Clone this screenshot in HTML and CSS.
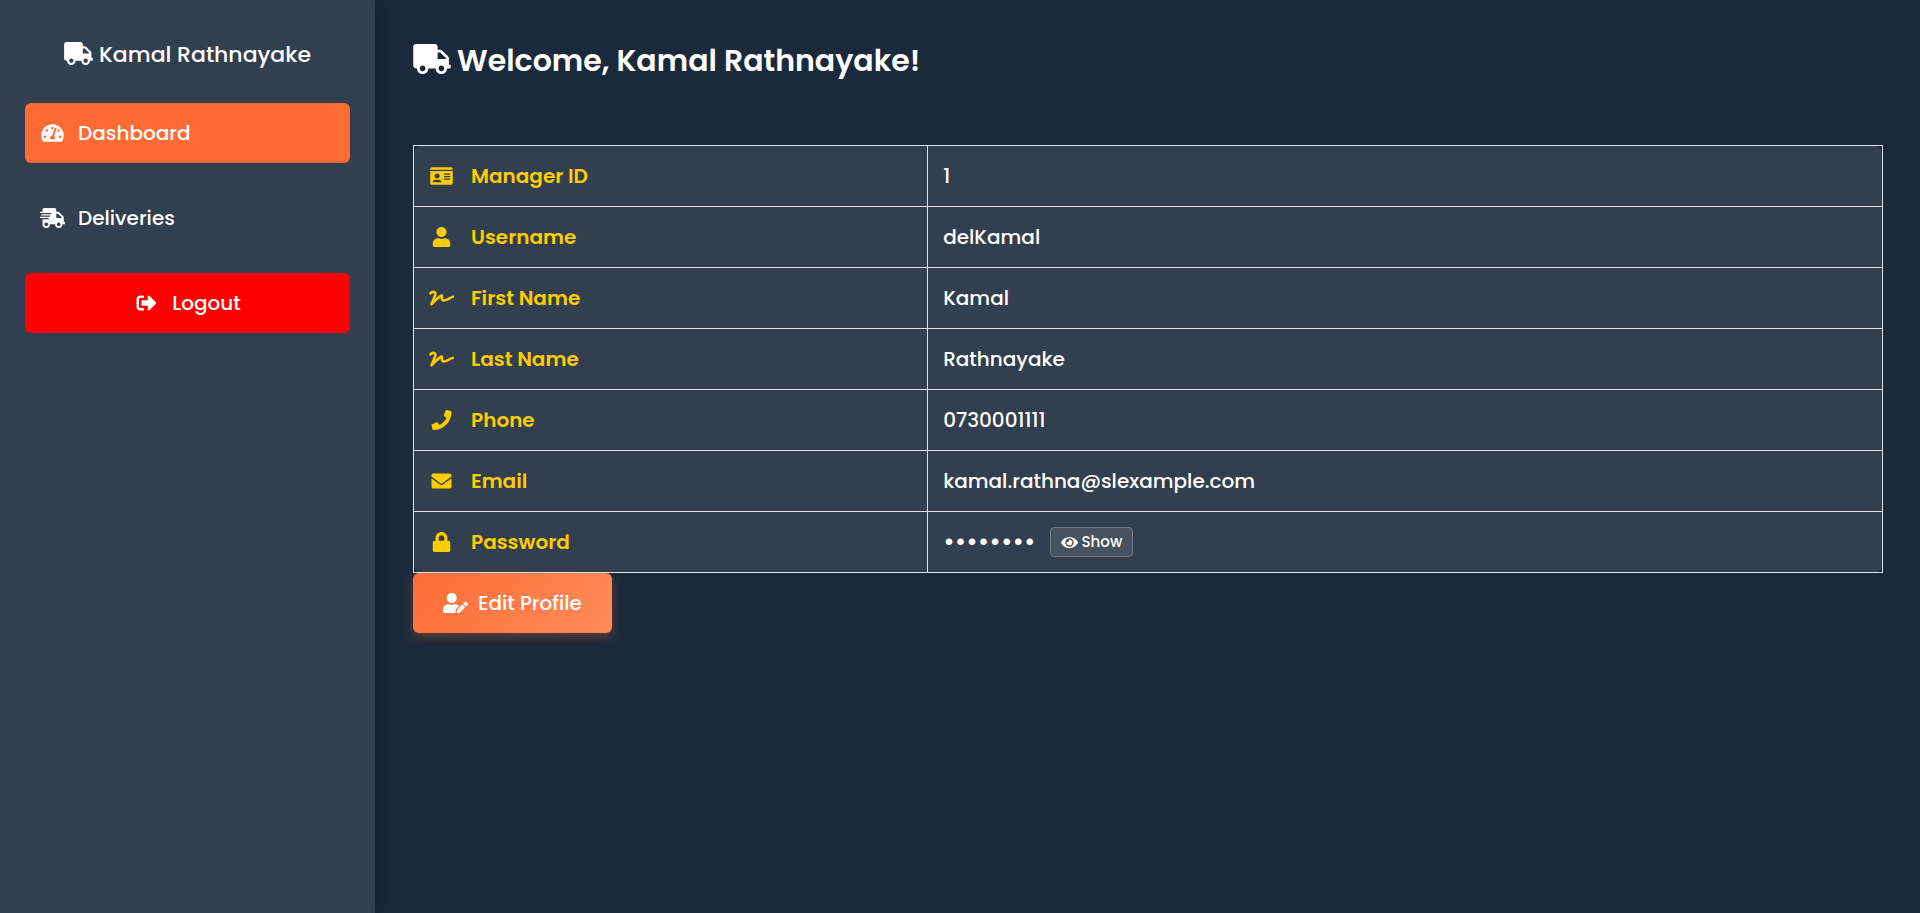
FILE: index.html
```html
<!DOCTYPE html>
<html lang="en">
<head>
<meta charset="utf-8">
<meta name="viewport" content="width=device-width, initial-scale=1">
<title>Delivery Manager Dashboard</title>
<link rel="stylesheet" href="styles.css">
</head>
<body>
<svg class="sprite" aria-hidden="true">
  <symbol id="truck" viewBox="0 0 640 512"><path d="M624 352h-16V243.900c0-12.700-5.100-24.900-14.100-33.900L494 110.100c-9-9-21.200-14.100-33.900-14.100H416V48c0-26.500-21.500-48-48-48H48C21.500 0 0 21.500 0 48v320c0 26.500 21.500 48 48 48h16c0 53 43 96 96 96s96-43 96-96h128c0 53 43 96 96 96s96-43 96-96h48c8.800 0 16-7.200 16-16v-32c0-8.800-7.200-16-16-16zM160 464c-26.500 0-48-21.500-48-48s21.500-48 48-48 48 21.500 48 48-21.500 48-48 48zm320 0c-26.500 0-48-21.500-48-48s21.500-48 48-48 48 21.500 48 48-21.500 48-48 48zm80-208H416V144h44.100l99.900 99.900V256z"/></symbol>
  <symbol id="gauge" viewBox="0 0 576 512"><path d="M288 32C128.940 32 0 160.940 0 320c0 52.800 14.250 102.260 39.060 144.800 5.610 9.620 16.300 15.200 27.440 15.200h443c11.140 0 21.830-5.580 27.440-15.200C561.750 422.260 576 372.800 576 320c0-159.060-128.940-288-288-288zm0 64c14.710 0 26.580 10.130 30.320 23.650-1.110 2.260-2.640 4.230-3.450 6.670l-9.220 27.670c-5.130 3.490-10.970 6.010-17.640 6.010-17.670 0-32-14.330-32-32S270.330 96 288 96zM96 384c-17.670 0-32-14.330-32-32s14.330-32 32-32 32 14.330 32 32-14.330 32-32 32zm48-160c-17.670 0-32-14.330-32-32s14.330-32 32-32 32 14.330 32 32-14.330 32-32 32zm246.770-72.410l-61.330 184C343.130 347.330 352 364.540 352 384c0 11.720-3.380 22.550-8.880 32H232.880c-5.500-9.450-8.880-20.280-8.880-32 0-33.940 26.500-61.430 59.900-63.590l61.340-184.010c4.170-12.560 17.730-19.450 30.360-15.170 12.570 4.190 19.350 17.790 15.170 30.360zm14.660 57.200l15.520-46.550c3.470-1.290 7.130-2.230 11.050-2.230 17.670 0 32 14.330 32 32s-14.330 32-32 32c-11.380-.01-20.890-6.280-26.570-15.220zM480 384c-17.670 0-32-14.330-32-32s14.330-32 32-32 32 14.330 32 32-14.330 32-32 32z"/></symbol>
  <symbol id="shipping" viewBox="0 0 640 512"><path d="M624 352h-16V243.900c0-12.700-5.100-24.900-14.100-33.900L494 110.100c-9-9-21.200-14.100-33.900-14.100H416V48c0-26.500-21.500-48-48-48H112C85.500 0 64 21.500 64 48v48H8c-4.400 0-8 3.600-8 8v16c0 4.400 3.600 8 8 8h272c4.400 0 8 3.600 8 8v16c0 4.400-3.600 8-8 8H40c-4.400 0-8 3.600-8 8v16c0 4.400 3.600 8 8 8h208c4.400 0 8 3.600 8 8v16c0 4.400-3.600 8-8 8H8c-4.400 0-8 3.600-8 8v16c0 4.400 3.600 8 8 8h208c4.400 0 8 3.600 8 8v16c0 4.400-3.600 8-8 8H64v128c0 53 43 96 96 96s96-43 96-96h128c0 53 43 96 96 96s96-43 96-96h48c8.800 0 16-7.200 16-16v-32c0-8.800-7.200-16-16-16zM160 464c-26.500 0-48-21.500-48-48s21.500-48 48-48 48 21.500 48 48-21.500 48-48 48zm320 0c-26.500 0-48-21.500-48-48s21.500-48 48-48 48 21.500 48 48-21.500 48-48 48zm80-208H416V144h44.100l99.900 99.900V256z"/></symbol>
  <symbol id="sign-out" viewBox="0 0 512 512"><path d="M497 273L329 441c-15 15-41 4.500-41-17v-96H152c-13.300 0-24-10.700-24-24v-96c0-13.300 10.700-24 24-24h136V88c0-21.400 25.900-32 41-17l168 168c9.300 9.400 9.300 24.600 0 34zM192 436v-40c0-6.600-5.400-12-12-12H96c-17.700 0-32-14.300-32-32V160c0-17.700 14.300-32 32-32h84c6.600 0 12-5.400 12-12V76c0-6.600-5.400-12-12-12H96c-53 0-96 43-96 96v192c0 53 43 96 96 96h84c6.600 0 12-5.400 12-12z"/></symbol>
  <symbol id="id-card" viewBox="0 0 576 512"><path d="M528 32H48C21.500 32 0 53.500 0 80v16h576V80c0-26.500-21.500-48-48-48zM0 432c0 26.500 21.500 48 48 48h480c26.500 0 48-21.500 48-48V128H0v304zm352-232c0-4.400 3.600-8 8-8h144c4.400 0 8 3.600 8 8v16c0 4.400-3.600 8-8 8H360c-4.400 0-8-3.600-8-8v-16zm0 64c0-4.400 3.600-8 8-8h144c4.400 0 8 3.600 8 8v16c0 4.400-3.600 8-8 8H360c-4.400 0-8-3.600-8-8v-16zm0 64c0-4.400 3.600-8 8-8h144c4.400 0 8 3.600 8 8v16c0 4.400-3.600 8-8 8H360c-4.400 0-8-3.600-8-8v-16zM176 192c35.300 0 64 28.700 64 64s-28.700 64-64 64-64-28.700-64-64 28.700-64 64-64zM67.100 396.200C75.500 370.500 99.600 352 128 352h8.200c12.300 5.100 25.700 8 39.800 8s27.600-2.900 39.800-8h8.200c28.400 0 52.500 18.500 60.900 44.200 3.200 9.900-5.200 19.800-15.600 19.800H82.700c-10.400 0-18.800-10-15.600-19.800z"/></symbol>
  <symbol id="user" viewBox="0 0 448 512"><path d="M224 256c70.700 0 128-57.300 128-128S294.700 0 224 0 96 57.300 96 128s57.300 128 128 128zm89.600 32h-16.700c-22.200 10.200-46.900 16-72.900 16s-50.600-5.800-72.900-16h-16.700C60.200 288 0 348.200 0 422.400V464c0 26.500 21.500 48 48 48h352c26.500 0 48-21.500 48-48v-41.600c0-74.200-60.200-134.400-134.400-134.400z"/></symbol>
  <symbol id="signature" viewBox="0 0 640 512"><path d="M623.200 192c-51.800 3.500-125.700 54.700-163.100 71.500-29.100 13.100-54.200 24.400-76.100 24.400-22.600 0-26-16.200-21.300-51.900 1.100-8 11.700-79.200-42.700-76.100-25.100 1.500-64.300 24.800-169.500 126L192 182.200c30.400-75.900-53.200-151.500-129.700-102.800L7.400 116.300C0 121-2.200 130.900 2.500 138.400l17.200 27c4.700 7.500 14.600 9.700 22.100 4.900l58-38.900c18.400-11.700 40.700 7.200 32.700 27.100L34.300 404.100C27.500 421 37 448 64 448c8.300 0 16.500-3.200 22.600-9.400 42.200-42.200 154.700-150.700 211.200-195.800-2.200 28.500-2.100 58.900 20.600 83.800 15.300 16.800 37.300 25.300 65.500 25.300 35.600 0 68-14.600 102.300-30 33-14.800 99-62.600 138.400-65.800 8.500-.7 15.200-7.300 15.200-15.800v-32.100c.2-9.100-7.500-16.800-16.600-16.200z"/></symbol>
  <symbol id="phone" viewBox="0 0 512 512"><path d="M493.400 24.600l-104-24c-11.300-2.600-22.900 3.300-27.500 13.900l-48 112c-4.200 9.800-1.400 21.300 6.900 28l60.600 49.600c-36 76.700-98.900 140.500-177.200 177.200l-49.600-60.600c-6.800-8.300-18.200-11.100-28-6.900l-112 48C3.900 366.500-2 378.100.6 389.400l24 104C27.100 504.200 36.700 512 48 512c256.100 0 464-207.500 464-464 0-11.200-7.700-20.900-18.600-23.400z"/></symbol>
  <symbol id="envelope" viewBox="0 0 512 512"><path d="M502.300 190.800c3.900-3.100 9.700-.2 9.700 4.700V400c0 26.500-21.500 48-48 48H48c-26.500 0-48-21.500-48-48V195.600c0-5 5.700-7.800 9.700-4.700 22.400 17.400 52.100 39.500 154.100 113.600 21.100 15.400 56.700 47.800 92.200 47.600 35.700.3 72-32.800 92.300-47.600 102-74.100 131.600-96.300 154-113.700zM256 320c23.200.4 56.600-29.200 73.400-41.400 132.700-96.300 142.800-104.700 173.400-128.700 5.800-4.500 9.200-11.500 9.200-18.900v-19c0-26.500-21.500-48-48-48H48c-26.500 0-48 21.500-48 48v19c0 7.400 3.400 14.300 9.200 18.900 30.600 23.900 40.700 32.400 173.400 128.700 16.800 12.200 50.200 41.800 73.400 41.400z"/></symbol>
  <symbol id="lock" viewBox="0 0 448 512"><path d="M400 224h-24v-72C376 68.200 307.800 0 224 0S72 68.200 72 152v72H48c-26.500 0-48 21.500-48 48v192c0 26.500 21.500 48 48 48h352c26.500 0 48-21.500 48-48V272c0-26.500-21.500-48-48-48zm-104 0H152v-72c0-39.700 32.300-72 72-72s72 32.300 72 72v72z"/></symbol>
  <symbol id="user-edit" viewBox="0 0 640 512"><path d="M224 256c70.700 0 128-57.300 128-128S294.700 0 224 0 96 57.300 96 128s57.300 128 128 128zm89.600 32h-16.700c-22.200 10.200-46.900 16-72.900 16s-50.600-5.800-72.900-16h-16.700C60.200 288 0 348.200 0 422.400V464c0 26.500 21.500 48 48 48h274.900c-2.400-6.800-3.400-14-2.600-21.300l6.800-60.900 1.200-11.100 7.900-7.900 77.300-77.300c-24.500-27.700-60-45.500-99.900-45.500zm45.300 145.300l-6.800 61c-1.100 10.200 7.500 18.800 17.600 17.600l60.900-6.800 137.900-137.900-71.700-71.700-137.900 137.800zM633 268.900L595.100 231c-9.300-9.300-24.500-9.300-33.800 0l-37.800 37.800-4.100 4.100 71.800 71.700 41.800-41.800c9.300-9.400 9.300-24.500 0-33.900z"/></symbol>
  <symbol id="eye" viewBox="0 0 576 512"><path d="M572.520 241.400C518.290 135.590 410.930 64 288 64S57.680 135.640 3.480 241.410a32.350 32.350 0 0 0 0 29.190C57.710 376.410 165.070 448 288 448s230.320-71.640 284.520-177.410a32.350 32.350 0 0 0 0-29.190zM288 400a144 144 0 1 1 144-144 143.930 143.930 0 0 1-144 144zm0-240a95.310 95.310 0 0 0-25.310 3.790 47.850 47.850 0 0 1-66.900 66.900A95.780 95.780 0 1 0 288 160z"/></symbol>
</svg>
<div class="layout">
  <aside class="sidebar">
    <h2 class="brand"><svg class="icon icon-brand" aria-hidden="true"><use href="#truck"/></svg>Kamal Rathnayake</h2>
    <nav class="nav">
      <a class="nav-link active" href="#dashboard"><svg class="icon" aria-hidden="true"><use href="#gauge"/></svg>Dashboard</a>
      <a class="nav-link" href="#deliveries"><svg class="icon" aria-hidden="true"><use href="#shipping"/></svg>Deliveries</a>
      <button class="nav-link logout" type="button"><svg class="icon" aria-hidden="true"><use href="#sign-out"/></svg>Logout</button>
    </nav>
  </aside>
  <main class="content">
    <h1 class="welcome"><svg class="icon icon-welcome" aria-hidden="true"><use href="#truck"/></svg>Welcome, Kamal Rathnayake!</h1>
    <table class="profile">
      <tbody>
        <tr><th scope="row"><span class="label"><svg class="icon" aria-hidden="true"><use href="#id-card"/></svg>Manager ID</span></th><td>1</td></tr>
        <tr><th scope="row"><span class="label"><svg class="icon" aria-hidden="true"><use href="#user"/></svg>Username</span></th><td>delKamal</td></tr>
        <tr><th scope="row"><span class="label"><svg class="icon" aria-hidden="true"><use href="#signature"/></svg>First Name</span></th><td>Kamal</td></tr>
        <tr><th scope="row"><span class="label"><svg class="icon" aria-hidden="true"><use href="#signature"/></svg>Last Name</span></th><td>Rathnayake</td></tr>
        <tr><th scope="row"><span class="label"><svg class="icon" aria-hidden="true"><use href="#phone"/></svg>Phone</span></th><td>0730001111</td></tr>
        <tr><th scope="row"><span class="label"><svg class="icon" aria-hidden="true"><use href="#envelope"/></svg>Email</span></th><td>kamal.rathna@slexample.com</td></tr>
        <tr><th scope="row"><span class="label"><svg class="icon" aria-hidden="true"><use href="#lock"/></svg>Password</span></th><td><div class="password"><span class="mask">••••••••</span><button class="show" type="button"><svg class="icon icon-show" aria-hidden="true"><use href="#eye"/></svg>Show</button></div></td></tr>
      </tbody>
    </table>
    <button class="edit" type="button"><svg class="icon" aria-hidden="true"><use href="#user-edit"/></svg>Edit Profile</button>
  </main>
</div>
</body>
</html>
```
FILE: styles.css
```css
* {
  box-sizing: border-box;
}

body {
  margin: 0;
  background: #1b2a3a;
  color: #fff;
  font-family: Poppins, Inter, sans-serif;
  font-size: 20px;
  font-weight: 500;
  line-height: 30px;
}

button {
  border: 0;
  color: inherit;
  font: inherit;
  cursor: pointer;
}

.sprite {
  position: absolute;
  width: 0;
  height: 0;
}

.icon {
  flex: none;
  width: 25px;
  height: 20px;
  fill: currentColor;
}

.layout {
  display: flex;
  min-height: 100vh;
}

.sidebar {
  flex: none;
  width: 375px;
  padding: 37px 25px;
  background: #323f4e;
  box-shadow: 4px 0 20px rgba(0, 0, 0, 0.3);
}

.brand {
  margin: 0 0 30px;
  font-size: 22px;
  font-weight: 500;
  line-height: 36px;
  text-align: center;
}

.icon-brand {
  width: 29px;
  height: 23px;
  margin-right: 6px;
  vertical-align: -3px;
}

.nav {
  display: flex;
  flex-direction: column;
  gap: 25px;
}

.nav-link {
  display: flex;
  align-items: center;
  gap: 13px;
  padding: 15px;
  border-radius: 6px;
  color: #fff;
  text-decoration: none;
}

.active {
  background: #ff6b35;
}

.logout {
  justify-content: center;
  background: #f00;
}

.content {
  flex: 1;
  padding: 38px;
  padding-right: 37px;
}

.welcome {
  margin: 0 0 61px;
  font-size: 30px;
  font-weight: 600;
  line-height: 46px;
}

.icon-welcome {
  width: 38px;
  height: 30px;
  margin-right: 6px;
  vertical-align: -3px;
}

.profile {
  width: 100%;
  border-collapse: collapse;
  border-radius: 10px;
  background: #323f4e;
}

.profile th,
.profile td {
  padding: 15px;
  border: 1px solid #dee2e6;
  text-align: left;
}

.profile th {
  width: 35%;
  color: #fc0;
  font-weight: 600;
}

.label {
  display: flex;
  align-items: center;
  gap: 17px;
}

.password {
  display: flex;
  align-items: center;
  gap: 14px;
}

.mask {
  font-size: 25px;
}

.show {
  display: flex;
  align-items: center;
  gap: 4px;
  padding: 3px 10px;
  border: 1px solid #707984;
  border-radius: 4px;
  background: #47525f;
  font-size: 15px;
  line-height: 22px;
}

.icon-show {
  width: 17px;
  height: 15px;
}

.edit {
  display: flex;
  align-items: center;
  gap: 10px;
  padding: 15px 30px;
  border-radius: 6px;
  background: linear-gradient(135deg, #ff6b35, #ff8c5a);
  box-shadow: 0 4px 10px rgba(255, 107, 53, 0.3);
}
```
